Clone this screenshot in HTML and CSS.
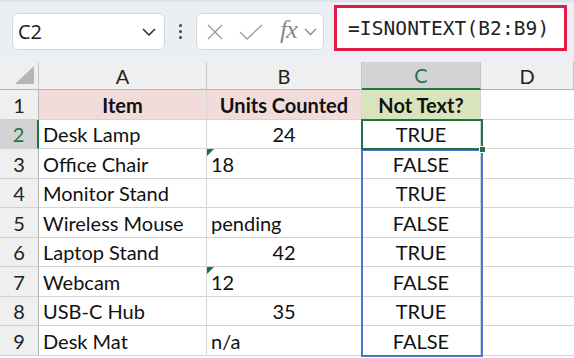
FILE: index.html
```html
<!DOCTYPE html>
<html>
<head>
<meta charset="utf-8">
<link rel="stylesheet" href="styles.css">
</head>
<body>
<div class="app">
  <div class="toolbar">
    <div class="namebox">
      <span class="ref">C2</span>
      <svg class="chev" width="14" height="8" viewBox="0 0 14 8"><path d="M1 1 L7 7 L13 1" fill="none" stroke="#333" stroke-width="1.6"/></svg>
    </div>
    <div class="dots"><span></span><span></span><span></span></div>
    <div class="fnbox">
      <svg class="ic-x" width="16" height="16" viewBox="0 0 16 16"><path d="M1 1 L15 15 M15 1 L1 15" stroke="#9a9a9a" stroke-width="1.3" fill="none"/></svg>
      <svg class="ic-ok" width="24" height="16" viewBox="0 0 24 16"><path d="M1 8 L8 15 L23 1" stroke="#9a9a9a" stroke-width="1.3" fill="none"/></svg>
      <span class="fx">fx</span>
      <svg class="ic-dd" width="13" height="8" viewBox="0 0 13 8"><path d="M1 1 L6.5 6.5 L12 1" fill="none" stroke="#8a8a8a" stroke-width="1.4"/></svg>
    </div>
    <div class="formula">=ISNONTEXT(B2:B9)</div>
  </div>
  <div class="sheet">
    <div class="grid">
      <div class="ch corner"><span class="tri"></span></div>
      <div class="ch">A</div>
      <div class="ch">B</div>
      <div class="ch sel">C</div>
      <div class="ch">D</div>

      <div class="rh">1</div>
      <div class="c hdr pink">Item</div>
      <div class="c hdr pink">Units Counted</div>
      <div class="c hdr green">Not Text?</div>
      <div class="c d"></div>

      <div class="rh sel">2</div>
      <div class="c">Desk Lamp</div>
      <div class="c ctr">24</div>
      <div class="c ctr">TRUE</div>
      <div class="c d"></div>

      <div class="rh">3</div>
      <div class="c">Office Chair</div>
      <div class="c txt">18</div>
      <div class="c ctr">FALSE</div>
      <div class="c d"></div>

      <div class="rh">4</div>
      <div class="c">Monitor Stand</div>
      <div class="c"></div>
      <div class="c ctr">TRUE</div>
      <div class="c d"></div>

      <div class="rh">5</div>
      <div class="c">Wireless Mouse</div>
      <div class="c">pending</div>
      <div class="c ctr">FALSE</div>
      <div class="c d"></div>

      <div class="rh">6</div>
      <div class="c">Laptop Stand</div>
      <div class="c ctr">42</div>
      <div class="c ctr">TRUE</div>
      <div class="c d"></div>

      <div class="rh">7</div>
      <div class="c">Webcam</div>
      <div class="c txt">12</div>
      <div class="c ctr">FALSE</div>
      <div class="c d"></div>

      <div class="rh">8</div>
      <div class="c">USB-C Hub</div>
      <div class="c ctr">35</div>
      <div class="c ctr">TRUE</div>
      <div class="c d"></div>

      <div class="rh">9</div>
      <div class="c">Desk Mat</div>
      <div class="c">n/a</div>
      <div class="c ctr">FALSE</div>
      <div class="c d"></div>
    </div>
    <div class="range"></div>
    <div class="active"><span class="handle"></span></div>
  </div>
</div>
</body>
</html>
```
FILE: styles.css
```css
* { box-sizing: border-box; }
html, body { margin: 0; padding: 0; background: #ffffff; }
.app { width: 574px; height: 358px; overflow: hidden; font-family: Lato, "Liberation Sans", sans-serif; color: #111; }

.toolbar {
  height: 62px;
  background: #ebeff3;
  display: flex;
  align-items: flex-start;
  padding-left: 12px;
  border-top: 2px solid #dfe3e8;
}
.namebox {
  margin-top: 11px;
  width: 153px;
  height: 37px;
  background: #fff;
  border: 1px solid #d3d6da;
  border-radius: 6px;
  display: flex;
  align-items: center;
  justify-content: space-between;
  padding: 0 8px 0 5px;
}
.ref { font-family: "Open Sans", "Liberation Sans", sans-serif; font-size: 20px; color: #1a1a1a; }
.dots { width: 31px; height: 37px; margin-top: 11px; display: flex; flex-direction: column; align-items: center; justify-content: center; gap: 3px; }
.dots span { width: 3px; height: 3px; background: #444; border-radius: 50%; }
.fnbox {
  margin-top: 11px;
  width: 128px;
  height: 37px;
  background: #fff;
  border: 1px solid #d3d6da;
  border-radius: 6px;
  display: flex;
  align-items: center;
  padding: 0 0 0 10px;
}
.ic-ok { margin-left: 16px; }
.fx { font-family: "Liberation Serif", serif; font-style: italic; font-size: 26px; color: #8a8a8a; margin-left: 17px; letter-spacing: -1px; line-height: 1; margin-top: -4px; }
.ic-dd { margin-left: 7px; }
.formula {
  margin-top: 3px;
  margin-left: 10px;
  width: 233px;
  height: 46px;
  background: #fff;
  border: 3px solid #e31b46;
  font-family: "DejaVu Sans Mono", monospace;
  font-size: 19.5px;
  color: #222;
  display: flex;
  align-items: center;
  padding-left: 11px;
  letter-spacing: 0.1px;
}

.sheet { position: relative; }
.grid {
  display: grid;
  grid-template-columns: 39px 168px 155px 119px 93px;
  grid-template-rows: 28px 30px 29px 30px 29px 30px 29px 30px 29px 30px;
}
.ch {
  background: #efefef;
  border-right: 1px solid #c4c4c4;
  border-bottom: 1px solid #b4b4b4;
  display: flex; align-items: center; justify-content: center;
  font-size: 20px; color: #222;
}
.ch.sel { background: #d3d3d3; color: #217346; border-bottom: 2px solid #217346; }
.corner { position: relative; }
.tri { position: absolute; right: 4px; bottom: 5px; width: 19px; height: 18px; background: #b5b5b5; clip-path: polygon(100% 0, 100% 100%, 0 100%); }
.rh {
  background: #efefef;
  border-right: 1px solid #b4b4b4;
  border-bottom: 1px solid #d0d0d0;
  display: flex; align-items: center; justify-content: center;
  font-size: 20px; color: #222;
}
.rh.sel { background: #d3d3d3; color: #217346; border-right: 2px solid #217346; }
.c {
  border-right: 1px solid #d4d4d4;
  border-bottom: 1px solid #d4d4d4;
  display: flex; align-items: center;
  padding-left: 4px;
  font-size: 20px; color: #111;
  white-space: nowrap;
  position: relative;
}
.c.d { border-right: none; }
.ctr { justify-content: center; padding-left: 0; }
.hdr { justify-content: center; padding-left: 0; font-weight: bold; }
.pink { background: #f2dcdb; }
.green { background: #d8e4bc; }
.txt::before {
  content: ""; position: absolute; left: 0; top: 0; width: 7px; height: 7px;
  background: #1e7145; clip-path: polygon(0 0, 100% 0, 0 100%);
}
.range {
  position: absolute; left: 361px; top: 87px; width: 122px; height: 208px;
  border: 2px solid #4a78c8;
}
.active {
  position: absolute; left: 361px; top: 57px; width: 122px; height: 31px;
  border: 2px solid #217346;
}
.handle {
  position: absolute; right: -5px; bottom: -5px; width: 7px; height: 7px;
  background: #217346; border: 1px solid #fff;
}
```
